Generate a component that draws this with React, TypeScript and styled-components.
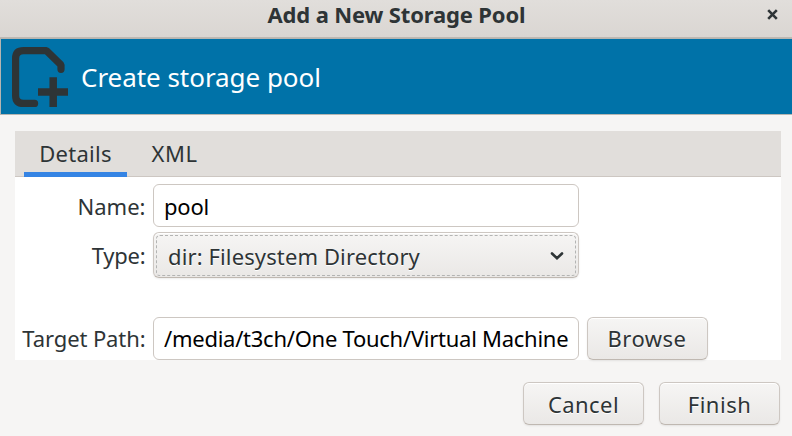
import React from 'react';
import styled, { createGlobalStyle } from 'styled-components';

const GlobalStyle = createGlobalStyle`
  *, *::before, *::after { box-sizing: border-box; }
  body { margin: 0; }
`;

const Dialog = styled.div`
  display: flex;
  flex-direction: column;
  width: 792px;
  height: 436px;
  overflow: hidden;
  background: #f6f5f4;
  color: #2e3436;
  font: 22px/30px "Noto Sans", "Open Sans", sans-serif;
  white-space: nowrap;
`;

const TitleBar = styled.header`
  display: grid;
  grid-template-columns: 40px 1fr 40px;
  height: 38px;
  background: linear-gradient(#e1dedb, #dad6d2);
  border-bottom: 1px solid #bfb8b1;
`;

const Title = styled.h1`
  grid-column: 2;
  margin: -1px 0 0 1px;
  text-align: center;
  font-size: 22px;
  line-height: 30px;
  font-weight: 700;
  letter-spacing: -0.15px;
`;

const CloseButton = styled.button`
  display: flex;
  align-items: flex-start;
  padding: 9px 0 0 15px;
  border: 0;
  background: none;
  color: #2e3436;
`;

const Banner = styled.div`
  display: flex;
  align-items: center;
  flex: none;
  height: 77px;
  border: 1px solid #b5b5b1;
  border-right: 0;
  background: #0072a8;
  color: #fff;
`;

const BannerIcon = styled.svg`
  flex: none;
  margin-left: 9px;
`;

const BannerText = styled.span`
  margin-left: 11px;
  font-size: 26px;
  line-height: 36px;
  letter-spacing: -0.04px;
`;

const Notebook = styled.main`
  display: flex;
  flex-direction: column;
  flex: none;
  width: 766px;
  height: 229px;
  margin: 16px 0 0 14.5px;
  background: #fff;
`;

const TabBar = styled.nav`
  display: flex;
  flex: none;
  height: 46px;
  padding-left: 9.5px;
  background: #e1dedb;
  border-bottom: 1px solid #cdc7c2;
`;

const Tab = styled.button<{ $active?: boolean; $tracking: number }>`
  flex: none;
  width: ${(p) => (p.$active ? 103 : 95)}px;
  height: 46px;
  padding: 2px 0 0;
  border: 0;
  border-bottom: 5px solid ${(p) => (p.$active ? '#3584e4' : 'transparent')};
  background: none;
  color: inherit;
  font: inherit;
  letter-spacing: ${(p) => p.$tracking}px;
`;

const Form = styled.div`
  display: grid;
  grid-template-columns: 131px 426px 120px;
  grid-template-rows: 43px 46px 43px;
  column-gap: 7.5px;
  padding-top: 7px;
`;

const Label = styled.label<{ $tracking?: number }>`
  grid-column: 1;
  align-self: center;
  text-align: right;
  letter-spacing: ${(p) => p.$tracking ?? 0}px;
`;

const Entry = styled.input<{ $tracking: number }>`
  width: 426px;
  height: 43px;
  padding: 0 9px 0 10px;
  border: 1px solid #cdc7c2;
  border-radius: 6px;
  outline: none;
  background: #fff;
  color: #000;
  font: inherit;
  letter-spacing: ${(p) => p.$tracking}px;
`;

const buttonFace = `
  border: 1px solid #cdc7c2;
  border-bottom-color: #bfb8b1;
  border-radius: 6px;
  background: linear-gradient(#f6f5f4, #eae8e6);
  box-shadow: inset 0 1px #fff, 0 1px 2px rgba(0, 0, 0, 0.08);
  color: #2e3436;
  font: inherit;
  text-shadow: 0 1px #fff;
`;

const Button = styled.button<{ $tracking: number; $width?: number }>`
  ${buttonFace}
  width: ${(p) => p.$width ?? 121}px;
  height: 43px;
  padding: 0;
  letter-spacing: ${(p) => p.$tracking}px;
`;

const Combo = styled.button`
  ${buttonFace}
  width: 426px;
  height: 46px;
  padding: 2px;
`;

const FocusRing = styled.span`
  display: flex;
  align-items: center;
  justify-content: space-between;
  height: 41px;
  padding: 1px 11px 0;
  border: 1px dashed #b3b4b3;
  border-radius: 4px;
  letter-spacing: 0.12px;
`;

const Actions = styled.footer`
  display: flex;
  justify-content: flex-end;
  gap: 15px;
  padding: 22px 12px 0 0;
`;

const PoolFields = styled(Form)`
  grid-template-rows: 43px 46px;
  row-gap: 4.5px;
`;

const PathFields = styled(Form)`
  grid-template-rows: 43px;
  padding-top: 39px;
`;

export default function App() {
  return (
    <>
      <GlobalStyle />
      <Dialog>
        <TitleBar>
          <Title>Add a New Storage Pool</Title>
          <CloseButton aria-label="Close">
            <svg width="11" height="11" viewBox="0 0 11 11">
              <path d="M1.2 1.2 9.8 9.8M9.8 1.2 1.2 9.8" stroke="currentColor" strokeWidth="2.6" />
            </svg>
          </CloseButton>
        </TitleBar>
        <Banner>
          <BannerIcon width="60" height="62" viewBox="0 0 60 62" fill="none" stroke="#2e3436">
            <path
              d="M24.6 57.4H13.5Q5.6 57.4 5.6 49.4V12.4Q5.6 4.6 13.5 4.6H36.4L51 18.8V23.3"
              strokeWidth="7.2"
              strokeLinecap="round"
              strokeLinejoin="bevel"
            />
            <path d="M43.2 31.2V61M28 45.9H58" strokeWidth="7.5" />
          </BannerIcon>
          <BannerText>Create storage pool</BannerText>
        </Banner>
        <Notebook>
          <TabBar>
            <Tab $active $tracking={0.3}>Details</Tab>
            <Tab $tracking={0.6}>XML</Tab>
          </TabBar>
          <PoolFields>
            <Label htmlFor="name">Name:</Label>
            <Entry id="name" defaultValue="pool" $tracking={-0.2} />
            <Label $tracking={-0.2}>Type:</Label>
            <Combo>
              <FocusRing>
                dir: Filesystem Directory
                <svg width="14" height="10" viewBox="0 0 14 10">
                  <path
                    d="M2 2.5 7 7.3 12 2.5"
                    fill="none"
                    stroke="currentColor"
                    strokeWidth="2.6"
                    strokeLinecap="round"
                  />
                </svg>
              </FocusRing>
            </Combo>
          </PoolFields>
          <PathFields>
            <Label htmlFor="path" $tracking={-0.1}>Target Path:</Label>
            <Entry
              id="path"
              defaultValue="/media/t3ch/One Touch/Virtual Machine"
              $tracking={-0.26}
            />
            <Button $tracking={0.48} $width={121}>Browse</Button>
          </PathFields>
        </Notebook>
        <Actions>
          <Button $tracking={0.44}>Cancel</Button>
          <Button $tracking={0.52}>Finish</Button>
        </Actions>
      </Dialog>
    </>
  );
}
